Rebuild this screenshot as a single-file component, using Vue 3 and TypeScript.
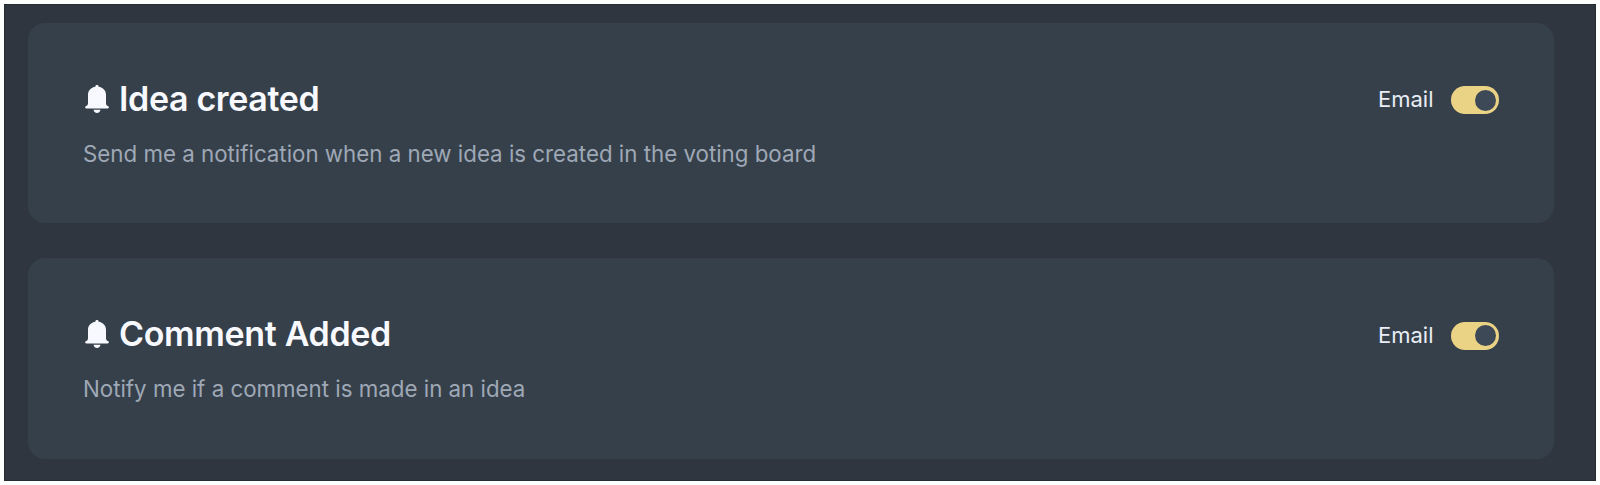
<script setup lang="ts">
import { reactive } from 'vue'

interface NotificationSetting {
  id: string
  title: string
  description: string
  email: boolean
}

const settings = reactive<NotificationSetting[]>([
  {
    id: 'idea-created',
    title: 'Idea created',
    description: 'Send me a notification when a new idea is created in the voting board',
    email: true,
  },
  {
    id: 'comment-added',
    title: 'Comment Added',
    description: 'Notify me if a comment is made in an idea',
    email: true,
  },
])
</script>

<template>
  <main class="frame">
    <div class="panel">
      <section v-for="item in settings" :key="item.id" class="card">
        <div class="info">
          <h2 class="heading">
            <svg class="bell" viewBox="0 0 24 28" aria-hidden="true">
              <path
                d="M12 0c-1 0-1.600.600-1.600 1.400v.4C6 2.400 3 5.600 3 9.800v8c0 1.600-.3 2.300-1.200 2.900l-1.100.6C-.3 21.900.1 23.400 1.300 23.400h21.400c1.200 0 1.600-1.500.6-2.100l-1.100-.6c-.9-.6-1.200-1.300-1.200-2.900v-8c0-4.200-3-7.400-7.400-8v-.4C13.600.6 13 0 12 0z"
              />
              <path d="M8.600 24.700h6.800c0 1.800-1.500 3.200-3.400 3.200s-3.400-1.400-3.400-3.200z" />
            </svg>
            <span class="title">{{ item.title }}</span>
          </h2>
          <p class="description">{{ item.description }}</p>
        </div>
        <div class="channel">
          <span class="label">Email</span>
          <button
            type="button"
            role="switch"
            class="toggle"
            :class="{ on: item.email }"
            :aria-checked="item.email"
            aria-label="Email"
            @click="item.email = !item.email"
          >
            <span class="knob"></span>
          </button>
        </div>
      </section>
    </div>
  </main>
</template>

<style>
body {
  background: #fdfefe;
}
</style>

<style scoped>
.frame {
  box-sizing: border-box;
  height: 485px;
  padding: 4px;
  font-family: Inter, 'Liberation Sans', sans-serif;
}
.panel {
  box-sizing: border-box;
  display: flex;
  flex-direction: column;
  gap: 35px;
  height: 477px;
  padding: 18px 41px 0 23px;
  background: #2f3640;
  border: 1px solid #252b33;
}
.card {
  box-sizing: border-box;
  display: flex;
  justify-content: space-between;
  align-items: flex-start;
  height: 200.3px;
  padding: 55px 55px 0;
  background: #36404a;
  border-radius: 17px;
}
.heading {
  display: flex;
  align-items: center;
  height: 40px;
  margin: 0;
  font-size: 34px;
  font-weight: 600;
  letter-spacing: -0.35px;
  color: #f7f9fe;
}
.bell {
  width: 24px;
  height: 28px;
  margin: 1px 10px 0 2px;
  fill: #f7f9fe;
}
.title {
  white-space: nowrap;
}
.description {
  margin: 21.7px 0 0;
  font-size: 22.3px;
  line-height: 28px;
  color: #9ea8b6;
  white-space: nowrap;
}
.channel {
  display: flex;
  align-items: center;
  gap: 17.5px;
  height: 42px;
  margin-top: 1.4px;
}
.label {
  padding-bottom: 2px;
  font-size: 22px;
  line-height: 28px;
  color: #e9edf5;
}
.toggle {
  box-sizing: border-box;
  display: flex;
  align-items: center;
  width: 48px;
  height: 28px;
  padding: 0 3.5px;
  border: 0;
  border-radius: 14px;
  background: #6b7480;
}
.toggle.on {
  justify-content: flex-end;
  background: #ebd386;
}
.knob {
  width: 21px;
  height: 21px;
  border-radius: 50%;
  background: #3d4956;
}
</style>
